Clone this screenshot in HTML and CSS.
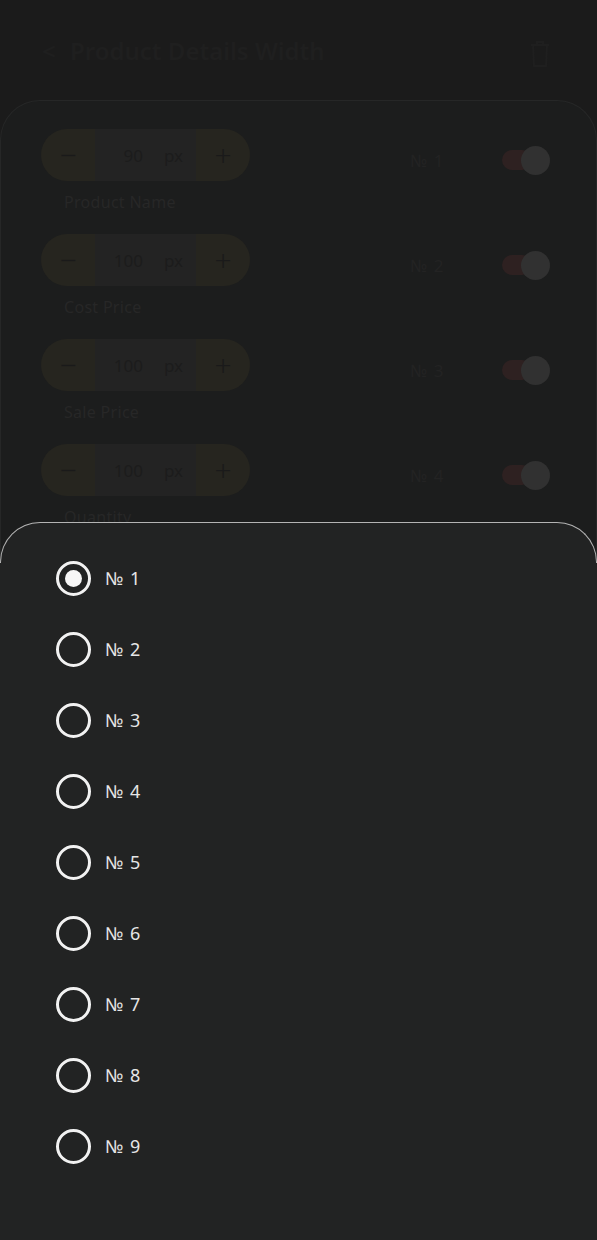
FILE: index.html
```html
<!DOCTYPE html>
<html lang="en">
<head>
<meta charset="utf-8">
<title>Column Width</title>
<link rel="stylesheet" href="styles.css">
</head>
<body>
<div class="page">
  <header class="topbar">
    <div class="title"><span class="back">&lt;</span> Product Details Width</div>
    <svg class="trash" width="22" height="26" viewBox="0 0 22 26"><path d="M2 4h18M8 4V1h6v3M4 4l1 21h12l1-21" fill="none" stroke="#1f1f1f" stroke-width="2"/></svg>
  </header>
  <main class="panel">
    <div class="row">
      <div class="col">
        <div class="stepper"><span class="btn">&minus;</span><span class="val"><b>90</b><i>px</i></span><span class="btn">+</span></div>
        <div class="label">Product Name</div>
      </div>
      <div class="right"><span class="num">№ 1</span><span class="toggle"><span class="track"></span><span class="knob"></span></span></div>
    </div>
    <div class="row">
      <div class="col">
        <div class="stepper"><span class="btn">&minus;</span><span class="val"><b>100</b><i>px</i></span><span class="btn">+</span></div>
        <div class="label">Cost Price</div>
      </div>
      <div class="right"><span class="num">№ 2</span><span class="toggle"><span class="track"></span><span class="knob"></span></span></div>
    </div>
    <div class="row">
      <div class="col">
        <div class="stepper"><span class="btn">&minus;</span><span class="val"><b>100</b><i>px</i></span><span class="btn">+</span></div>
        <div class="label">Sale Price</div>
      </div>
      <div class="right"><span class="num">№ 3</span><span class="toggle"><span class="track"></span><span class="knob"></span></span></div>
    </div>
    <div class="row">
      <div class="col">
        <div class="stepper"><span class="btn">&minus;</span><span class="val"><b>100</b><i>px</i></span><span class="btn">+</span></div>
        <div class="label">Quantity</div>
      </div>
      <div class="right"><span class="num">№ 4</span><span class="toggle"><span class="track"></span><span class="knob"></span></span></div>
    </div>
  </main>
  <section class="sheet">
    <div class="opt"><span class="radio on"></span><span class="opt-label">№ 1</span></div>
    <div class="opt"><span class="radio"></span><span class="opt-label">№ 2</span></div>
    <div class="opt"><span class="radio"></span><span class="opt-label">№ 3</span></div>
    <div class="opt"><span class="radio"></span><span class="opt-label">№ 4</span></div>
    <div class="opt"><span class="radio"></span><span class="opt-label">№ 5</span></div>
    <div class="opt"><span class="radio"></span><span class="opt-label">№ 6</span></div>
    <div class="opt"><span class="radio"></span><span class="opt-label">№ 7</span></div>
    <div class="opt"><span class="radio"></span><span class="opt-label">№ 8</span></div>
    <div class="opt"><span class="radio"></span><span class="opt-label">№ 9</span></div>
  </section>
</div>
</body>
</html>
```
FILE: styles.css
```css
* { box-sizing: border-box; }
html, body { margin: 0; padding: 0; }
body {
  background: #1b1b1b;
  font-family: "Noto Sans", "Open Sans", sans-serif;
  width: 597px;
  height: 1240px;
  overflow: hidden;
}
.page { position: relative; height: 1240px; }
.topbar {
  height: 100px;
  display: flex;
  align-items: center;
  justify-content: space-between;
  padding: 0 46px 0 42px;
}
.title { color: #1f1f1f; font-size: 24px; font-weight: 600; }
.back { margin-right: 8px; }
.trash { margin-top: 8px; }
.panel {
  background: #1c1d1d;
  border: 1px solid #262727;
  border-bottom: none;
  border-radius: 40px 40px 0 0;
  padding: 28px 46px 0 40px;
  height: 1140px;
  display: flex;
  flex-direction: column;
}
.row {
  display: flex;
  justify-content: space-between;
  align-items: flex-start;
  height: 105px;
}
.col { display: flex; flex-direction: column; }
.stepper {
  width: 209px;
  height: 52px;
  display: flex;
  border-radius: 26px;
  overflow: hidden;
}
.btn {
  width: 54px;
  background: #26251f;
  color: #1a1a1a;
  font-size: 30px;
  font-weight: 300;
  display: flex;
  align-items: center;
  justify-content: center;
  line-height: 1;
}
.val {
  flex: 1;
  background: #232323;
  display: flex;
  align-items: center;
  color: #1c1c1c;
  font-size: 17px;
}
.val b { font-weight: 400; width: 48px; text-align: right; }
.val i { font-style: normal; margin-left: 21px; }
.label {
  color: #272727;
  font-size: 16px;
  margin: 10px 0 0 23px;
  letter-spacing: 0.3px;
}
.right {
  display: flex;
  align-items: center;
  margin-top: 16px;
}
.num { color: #232323; font-size: 17px; width: 92px; letter-spacing: 1px; }
.toggle { display: flex; align-items: center; width: 48px; height: 30px; }
.track {
  width: 30px;
  height: 20px;
  border-radius: 10px;
  background: #2e2121;
}
.knob {
  width: 29px;
  height: 29px;
  border-radius: 50%;
  background: #313131;
  margin-left: -11px;
}
.sheet {
  position: absolute;
  left: 0;
  right: 0;
  top: 522px;
  bottom: 0;
  background: #222323;
  border-radius: 40px 40px 0 0;
  padding: 39px 0 0 56px;
  display: flex;
  flex-direction: column;
}
.sheet::before {
  content: "";
  position: absolute;
  left: 0;
  right: 0;
  top: 0;
  height: 40px;
  border: 1.5px solid #b4b4b4;
  border-bottom: none;
  border-radius: 40px 40px 0 0;
}
.opt {
  height: 71px;
  display: flex;
  align-items: flex-start;
}
.radio {
  width: 35px;
  height: 35px;
  border: 3px solid #f2f2f2;
  border-radius: 50%;
  display: flex;
  align-items: center;
  justify-content: center;
}
.radio.on::after {
  content: "";
  width: 17px;
  height: 17px;
  border-radius: 50%;
  background: #f7f7f7;
}
.opt-label {
  color: #e6e6e6;
  font-size: 18px;
  margin-left: 14px;
  line-height: 35px;
  letter-spacing: 1px;
}
```
